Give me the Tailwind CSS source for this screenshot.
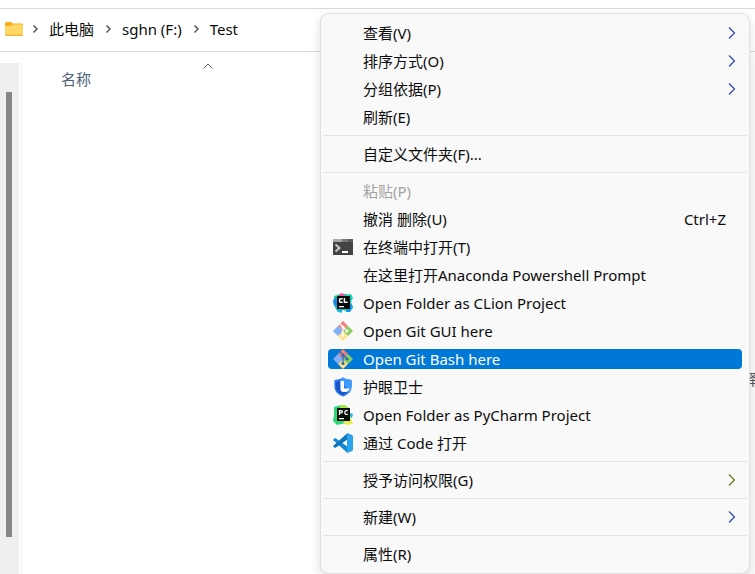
<!DOCTYPE html>
<html lang="zh-CN">
<head>
  <meta charset="UTF-8">
  <meta name="viewport" content="width=device-width, initial-scale=1.0">
  <title>Test</title>
  <script src="https://cdn.jsdelivr.net/npm/@tailwindcss/browser@4"></script>
</head>
<body class="relative flex flex-col h-screen overflow-hidden bg-white pt-2 font-['Noto_Sans','Noto_Sans_CJK_SC',sans-serif] text-[15px] leading-5 text-[#0c0c0c]">

  <!-- address bar -->
  <nav class="flex items-center h-11 shrink-0 border-y border-[#d9d9d9] pl-[5px] pb-[2px]">
    <svg class="w-[18px] h-4 shrink-0" viewBox="0 0 18 16">
      <path d="M0 2.5Q0 1 1 1h5l2 1.500h9q1 0 1 1V6H0z" fill="#f5b01c"/>
      <path d="M0 5h6l2-1.500h9q1 0 1 1V14q0 1-1 1H1q-1 0-1-1z" fill="#ffd766"/>
      <path d="M0 13.500h18v.5q0 1-1 1H1q-1 0-1-1z" fill="#f3b93a"/>
    </svg>
    <svg class="w-2 h-2 ml-2 shrink-0" viewBox="0 0 8 8" fill="none" stroke="#5a5a5a" stroke-width="1.500"><path d="M2.500 .5L6 4 2.500 7.500"/></svg>
    <a href="#" class="ml-[10px]">此电脑</a>
    <svg class="w-2 h-2 ml-[10px] shrink-0" viewBox="0 0 8 8" fill="none" stroke="#5a5a5a" stroke-width="1.500"><path d="M2.500 .5L6 4 2.500 7.500"/></svg>
    <a href="#" class="ml-[10px]">sghn (F:)</a>
    <svg class="w-2 h-2 ml-[10px] shrink-0" viewBox="0 0 8 8" fill="none" stroke="#5a5a5a" stroke-width="1.500"><path d="M2.500 .5L6 4 2.500 7.500"/></svg>
    <a href="#" class="ml-[10px]">Test</a>
  </nav>

  <main class="flex flex-1 min-h-0 pt-[11px]">
    <!-- scroll bar of the tree -->
    <div class="w-[19px] shrink-0 bg-[#efefef] pt-[29px] pb-[37px] pl-[6px]">
      <div class="w-[6px] h-full bg-[#868686]"></div>
    </div>
    <div class="flex-1 ml-[2px] border-l border-[#f3f3f3]">
      <button class="flex items-start text-[#4c607a]">
        <span class="ml-[39px] mt-[6px]">名称</span>
        <svg class="w-[10px] h-[6px] ml-[112px]" viewBox="0 0 10 6" fill="none" stroke="#666"><path d="M.5 5.500L5 1l4.500 4.500"/></svg>
      </button>
    </div>
    <aside class="flex items-center w-3 shrink-0 overflow-hidden pt-[120px] text-[#555] bg-[#fcfcfc]">择</aside>
  </main>

  <!-- context menu -->
  <div role="menu" class="absolute left-[320px] right-[5px] top-[13px] flex flex-col rounded-[9px] border border-[#e0e0e0] bg-[#f9f9f9] py-[5px] shadow-[0_4px_10px_rgba(0,0,0,0.14)]">
    <button role="menuitem" class="flex items-center h-5 mx-[7px] my-1 pl-[35px] pr-[6px]">
      <span>查看(V)</span>
      <svg class="w-2 h-3 ml-auto" viewBox="0 0 8 12" fill="none" stroke="#2f48a8" stroke-width="1.200"><path d="M1 .5L6.500 6 1 11.500"/></svg>
    </button>
    <button role="menuitem" class="flex items-center h-5 mx-[7px] my-1 pl-[35px] pr-[6px]">
      <span>排序方式(O)</span>
      <svg class="w-2 h-3 ml-auto" viewBox="0 0 8 12" fill="none" stroke="#2f48a8" stroke-width="1.200"><path d="M1 .5L6.500 6 1 11.500"/></svg>
    </button>
    <button role="menuitem" class="flex items-center h-5 mx-[7px] my-1 pl-[35px] pr-[6px]">
      <span>分组依据(P)</span>
      <svg class="w-2 h-3 ml-auto" viewBox="0 0 8 12" fill="none" stroke="#2f48a8" stroke-width="1.200"><path d="M1 .5L6.500 6 1 11.500"/></svg>
    </button>
    <button role="menuitem" class="flex items-center h-5 mx-[7px] my-1 pl-[35px]">刷新(E)</button>
    <hr class="mx-[2px] my-1 border-[#e2e2e2]">
    <button role="menuitem" class="flex items-center h-5 mx-[7px] my-1 pl-[35px]">自定义文件夹(F)...</button>
    <hr class="mx-[2px] my-1 border-[#e2e2e2]">
    <button role="menuitem" disabled class="flex items-center h-5 mx-[7px] my-1 pl-[35px] text-[#a3a3a3]">粘贴(P)</button>
    <button role="menuitem" class="flex items-center justify-between h-5 mx-[7px] my-1 pl-[35px] pr-4">
      <span>撤消 删除(U)</span>
      <span>Ctrl+Z</span>
    </button>
    <button role="menuitem" class="flex items-center gap-[10px] h-5 mx-[7px] my-1 pl-[5px]">
      <svg class="w-5 h-5" viewBox="0 0 20 20">
        <path d="M0 2h20v16H0z" fill="#444"/>
        <path d="M0 2h9v3H0z" fill="#aaa"/>
        <path d="M9 2h6v3H9z" fill="#777"/>
        <path d="M15 2h5v3h-5z" fill="#5c5c5c"/>
        <path d="M2.500 7.500L6.500 11l-4 3.500" fill="none" stroke="#ccc" stroke-width="2"/>
        <path d="M9 14h6v2H9z" fill="#fff"/>
      </svg>
      在终端中打开(T)
    </button>
    <button role="menuitem" class="flex items-center h-5 mx-[7px] my-1 pl-[35px]">在这里打开Anaconda Powershell Prompt</button>
    <button role="menuitem" class="flex items-center gap-[10px] h-5 mx-[7px] my-1 pl-[5px]">
      <svg class="w-5 h-5" viewBox="0 0 20 20">
        <path d="M1 3l6-2 6 0 6 2-1 7 2 5-5 4-5-2-5 2-4-7z" fill="#1fd08f"/>
        <path d="M7 1l2-1 3 2-2 2-4-1z" fill="#f04fa0"/>
        <path d="M13 2l5-1 2 4-3 5-3-6z" fill="#16cdb8"/>
        <path d="M0 7l4-3v8l-3 1z" fill="#1687e0"/>
        <path d="M1 12l5 1 4 4-2 3-4-2z" fill="#15b4d8"/>
        <path d="M14 14l4-4 2 4-3 5-4 0z" fill="#1499e6"/>
        <path d="M4 3h13v13H4z" fill="#050b0a"/>
        <path d="M9.600 5.700H7.700q-1.200 0-1.200 1.200v1.200q0 1.200 1.200 1.200h1.900M11.400 5v4.300h3.200" fill="none" stroke="#fff" stroke-width="1.400"/>
        <path d="M6 13h5v1.300H6z" fill="#fff"/>
      </svg>
      Open Folder as CLion Project
    </button>
    <button role="menuitem" class="flex items-center gap-[10px] h-5 mx-[7px] my-1 pl-[5px]">
      <svg class="w-5 h-5" viewBox="0 0 20 20">
        <path d="M10 0l5 5-5 5-5-5z" fill="#f5807a"/>
        <path d="M15 5l5 5-5 5-5-5z" fill="#87cf62"/>
        <path d="M5 5l5 5-5 5-5-5z" fill="#80aef8"/>
        <path d="M10 10l5 5-5 5-5-5z" fill="#ffe084"/>
        <path d="M6.500 2.500L10 6v9M10 6l4.500 4.500" fill="none" stroke="#f9f9f9" stroke-width="1.300"/>
        <circle cx="10" cy="6" r="1.600" fill="#f9f9f9"/><circle cx="14" cy="10" r="1.600" fill="#f9f9f9"/><circle cx="10" cy="14.500" r="1.600" fill="#f9f9f9"/>
      </svg>
      Open Git GUI here
    </button>
    <button role="menuitem" class="flex items-center gap-[10px] h-5 mx-[7px] my-1 pl-[5px] rounded bg-[#0078d7] text-white">
      <svg class="w-5 h-5" viewBox="0 0 20 20">
        <path d="M10 0l5 5-5 5-5-5z" fill="#f5807a"/>
        <path d="M15 5l5 5-5 5-5-5z" fill="#87cf62"/>
        <path d="M5 5l5 5-5 5-5-5z" fill="#80aef8"/>
        <path d="M10 10l5 5-5 5-5-5z" fill="#ffe084"/>
        <path d="M6.500 2.500L10 6v9M10 6l4.500 4.500" fill="none" stroke="#2a6cae" stroke-width="1.300"/>
        <circle cx="10" cy="6" r="1.600" fill="#2a6cae"/><circle cx="14" cy="10" r="1.600" fill="#2a6cae"/><circle cx="10" cy="14.500" r="1.600" fill="#2a6cae"/>
      </svg>
      Open Git Bash here
    </button>
    <button role="menuitem" class="flex items-center gap-[10px] h-5 mx-[7px] my-1 pl-[5px]">
      <svg class="w-5 h-5" viewBox="0 0 20 20">
        <path d="M10 .5l3 1.500 5.500 1q1 9-2 12.500-2.500 2.500-6.500 4-4-1.500-6.500-4-3-3.500-2-12.500l5.500-1z" fill="#2878ee"/>
        <path d="M10 .5l3 1.500 5.500 1q1 9-2 12.500L13 10 7 2z" fill="#3f9bfb"/>
        <path d="M3 5q-.5 7 2 10 2 2 5 3l5-4H7V4z" fill="#1655c8"/>
        <path d="M7.500 4H11v7.500h5.500q-.7 3.500-4.500 3.500h-1.500q-3 0-3-3z" fill="#fff"/>
      </svg>
      护眼卫士
    </button>
    <button role="menuitem" class="flex items-center gap-[10px] h-5 mx-[7px] my-1 pl-[5px]">
      <svg class="w-5 h-5" viewBox="0 0 20 20">
        <path d="M1 2l7-2 5 1 3 2 1 10-3 5-6 1-4 1-4-4 1-6z" fill="#2bd878"/>
        <path d="M7 0h5l5 4-2 3-8-4z" fill="#a8e645"/>
        <path d="M15 6l4 3-1 5 2 5-6 1-4-3 5-4z" fill="#e8ee50"/>
        <path d="M17 8l3 1-1 4-2-1z" fill="#20bce0"/>
        <path d="M4 3h13v13H4z" fill="#090d08"/>
        <path d="M6.500 9.900V5.700h1.800q1.100 0 1.100 1.100t-1.100 1.100H6.500M14.800 5.700h-1.700q-1.200 0-1.200 1.200v1.200q0 1.200 1.200 1.200h1.700" fill="none" stroke="#fff" stroke-width="1.300"/>
        <path d="M6 13h5v1.300H6z" fill="#fff"/>
      </svg>
      Open Folder as PyCharm Project
    </button>
    <button role="menuitem" class="flex items-center gap-[10px] h-5 mx-[7px] my-1 pl-[5px]">
      <svg class="w-5 h-5" viewBox="0 0 20 20">
        <path d="M1.200 5.500L0 7l14 12.500 1-5.500L3 5.500Q2 4.800 1.200 5.500z" fill="#1188d4"/>
        <path d="M1.200 14.500L0 13 14 .5l1 5.500L3 14.500q-1 .7-1.800 0z" fill="#0b75bd"/>
        <path d="M14.500 0L19 2q1 .5 1 1.500v13q0 1-1 1.500l-4.500 2q-.7-.2-.5-1V1q0-.8.5-1z" fill="#2ba2ee"/>
      </svg>
      通过 Code 打开
    </button>
    <hr class="mx-[2px] my-1 border-[#e2e2e2]">
    <button role="menuitem" class="flex items-center h-5 mx-[7px] my-1 pl-[35px] pr-[6px]">
      <span>授予访问权限(G)</span>
      <svg class="w-2 h-3 ml-auto" viewBox="0 0 8 12" fill="none" stroke="#6b7318" stroke-width="1.200"><path d="M1 .5L6.500 6 1 11.500"/></svg>
    </button>
    <hr class="mx-[2px] my-1 border-[#e2e2e2]">
    <button role="menuitem" class="flex items-center h-5 mx-[7px] my-1 pl-[35px] pr-[6px]">
      <span>新建(W)</span>
      <svg class="w-2 h-3 ml-auto" viewBox="0 0 8 12" fill="none" stroke="#2f48a8" stroke-width="1.200"><path d="M1 .5L6.500 6 1 11.500"/></svg>
    </button>
    <hr class="mx-[2px] my-1 border-[#e2e2e2]">
    <button role="menuitem" class="flex items-center h-5 mx-[7px] my-1 pl-[35px]">属性(R)</button>
  </div>

</body>
</html>
